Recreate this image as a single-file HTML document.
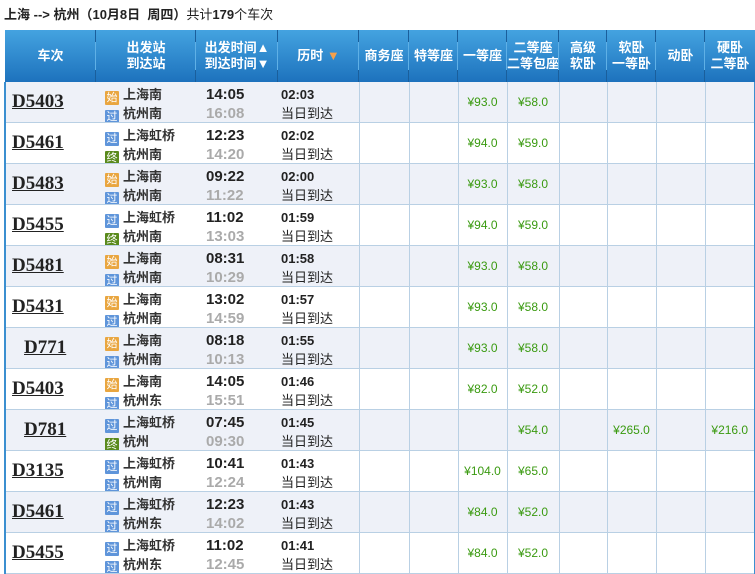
<!DOCTYPE html>
<html><head><meta charset="utf-8"><style>
body{margin:0;width:755px;height:574px;overflow:hidden;background:#fff;font-family:"Liberation Sans","Noto Sans CJK SC",sans-serif;}
.title{position:absolute;left:4px;top:4px;font-size:13px;color:#222;}
.title b{font-weight:bold}
table{position:absolute;left:4px;top:30px;border-collapse:collapse;table-layout:fixed;width:750px;}
th{height:52px;background:linear-gradient(#44a3e0,#1d72bd);color:#fff;font-size:13px;font-weight:bold;line-height:16px;padding:0;position:relative;text-align:center}
th.s{box-shadow:inset -1px 0 0 #1a5f9c;}
th.s:after{content:"";position:absolute;right:0;top:12px;bottom:12px;width:1px;background:#5fb0e6}
td{height:40px;padding:0;border-bottom:1px solid #b9d0e4;font-size:12px;color:#222;overflow:hidden}
td.c{border-left:1px solid #b9d0e4;text-align:center;color:#3a9a10;}
tr.o td{background:#eef1f8}
td.first{border-left:2px solid #3b8fd0}
td.last{border-right:2px solid #3b8fd0}
.tn{font-family:"Liberation Serif",serif;font-weight:bold;font-size:19px;text-decoration:underline;color:#222;}
.in{height:40px;box-sizing:border-box;padding-top:3px;overflow:hidden}
.st{font-size:13px;font-weight:bold;line-height:19px;height:19px;color:#333}
.ic{display:inline-block;width:14px;height:14px;font-size:11px;line-height:14px;text-align:center;color:#fff;font-weight:normal;margin-right:4px;vertical-align:-2px;border-radius:1px}
.a{background:#e9a640}.b{background:#5f95da}.g{background:#5a8a1c}
.tm{font-weight:bold;font-size:15px;line-height:19px;color:#222}
.tm span{color:#aaa;display:block;height:19px}
.du{font-size:13px;line-height:19px;color:#222}
.du b{display:block;height:19px}
</style></head><body>
<div class="title"><b>上海 --&gt; 杭州（10月8日&nbsp; 周四）</b>共计<b>179</b>个车次</div>
<table>
<colgroup><col style="width:91px"><col style="width:100px"><col style="width:82px"><col style="width:81px"><col style="width:50px"><col style="width:49px"><col style="width:49px"><col style="width:52px"><col style="width:48px"><col style="width:49px"><col style="width:49px"><col style="width:50px"></colgroup>
<tr><th class="s">车次</th><th class="s">出发站<br>到达站</th><th class="s">出发时间▲<br>到达时间▼</th><th class="s">历时 <span style="color:#f5a04a">▼</span></th><th class="s">商务座</th><th class="s">特等座</th><th class="s">一等座</th><th class="s">二等座<br>二等包座</th><th class="s">高级<br>软卧</th><th class="s">软卧<br>一等卧</th><th class="s">动卧</th><th>硬卧<br>二等卧</th></tr>
</table>
<script>
var R=[["D5403","a","上海南","b","杭州南","14:05","16:08","02:03","¥93.0","¥58.0","",""],
["D5461","b","上海虹桥","g","杭州南","12:23","14:20","02:02","¥94.0","¥59.0","",""],
["D5483","a","上海南","b","杭州南","09:22","11:22","02:00","¥93.0","¥58.0","",""],
["D5455","b","上海虹桥","g","杭州南","11:02","13:03","01:59","¥94.0","¥59.0","",""],
["D5481","a","上海南","b","杭州南","08:31","10:29","01:58","¥93.0","¥58.0","",""],
["D5431","a","上海南","b","杭州南","13:02","14:59","01:57","¥93.0","¥58.0","",""],
["D771","a","上海南","b","杭州南","08:18","10:13","01:55","¥93.0","¥58.0","",""],
["D5403","a","上海南","b","杭州东","14:05","15:51","01:46","¥82.0","¥52.0","",""],
["D781","b","上海虹桥","g","杭州","07:45","09:30","01:45","","¥54.0","¥265.0","¥216.0"],
["D3135","b","上海虹桥","b","杭州南","10:41","12:24","01:43","¥104.0","¥65.0","",""],
["D5461","b","上海虹桥","b","杭州东","12:23","14:02","01:43","¥84.0","¥52.0","",""],
["D5455","b","上海虹桥","b","杭州东","11:02","12:45","01:41","¥84.0","¥52.0","",""]];
var L={a:"始",b:"过",g:"终"};
var h="";
R.forEach(function(r,i){
var pl=r[0].length==4?18:6;
h+='<tr class="'+(i%2==0?'o':'')+'"><td class="first" style="padding-left:'+pl+'px"><span class="tn">'+r[0]+'</span></td>'+
'<td style="padding-left:9px"><div class="in"><div class="st"><span class="ic '+r[1]+'">'+L[r[1]]+'</span>'+r[2]+'</div><div class="st"><span class="ic '+r[3]+'">'+L[r[3]]+'</span>'+r[4]+'</div></div></td>'+
'<td style="padding-left:10px"><div class="in"><div class="tm">'+r[5]+'<span>'+r[6]+'</span></div></div></td>'+
'<td style="padding-left:3px"><div class="in"><div class="du"><b>'+r[7]+'</b>当日到达</div></div></td>'+
'<td class="c"></td><td class="c"></td><td class="c">'+r[8]+'</td><td class="c">'+r[9]+'</td><td class="c"></td><td class="c">'+r[10]+'</td><td class="c"></td><td class="c last">'+r[11]+'</td></tr>';
});
document.querySelector('table').insertAdjacentHTML('beforeend',h);
</script>
</body></html>
